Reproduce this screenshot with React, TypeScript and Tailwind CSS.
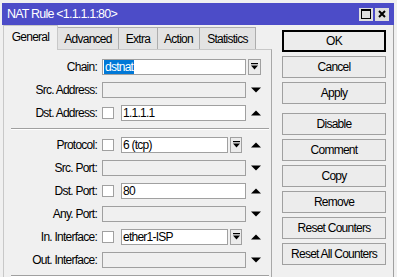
import React from "react";

const font = "font-['Liberation_Sans',Arial,sans-serif]";

function Tri({ up }: { up?: boolean }) {
  return (
    <svg width="10" height="6" viewBox="0 0 10 6" className="block">
      <path d={up ? "M0 5.5 L5 0.5 L10 5.5 Z" : "M0 0.5 L10 0.5 L5 5.5 Z"} fill="#000" />
    </svg>
  );
}

function DropBtn({ w = "w-[13px]" }: { w?: string }) {
  return (
    <div className={`${w} h-[16px] border border-[#a0a0a0] bg-[#ececec] flex items-center justify-center`}>
      <svg width="7" height="7" viewBox="0 0 7 7" className="block">
        <rect x="0" y="0" width="7" height="1.2" fill="#000" />
        <path d="M0 2.5 L7 2.5 L3.5 6.5 Z" fill="#000" />
      </svg>
    </div>
  );
}

function Check() {
  return <div className="w-[12px] h-[12px] border border-[#a0a0a0] bg-white shrink-0" />;
}

function Input({ w, value, disabled, selected }: { w: string; value?: string; disabled?: boolean; selected?: boolean }) {
  return (
    <div
      className={`${w} h-[16px] border border-[#a0a0a0] ${disabled ? "bg-[#f0f0f0]" : "bg-white"} pl-[1px] flex items-center leading-[14px] overflow-hidden whitespace-nowrap text-black`}
    >
      {selected ? <span className="bg-[#0078d7] text-white px-[1px]">{value}</span> : value}
    </div>
  );
}

function Row({ label, children }: { label: string; children: React.ReactNode }) {
  return (
    <div className="flex items-center h-[23px]">
      <div className="w-[93px] text-right whitespace-nowrap text-black">{label}</div>
      <div className="ml-[5px] flex items-center">{children}</div>
    </div>
  );
}

function Sep() {
  return <div className="ml-[7px] mr-[2px] mt-[4px] mb-[3px] border-t border-[#a0a0a0] border-b border-b-white" />;
}

const tabs = [
  { name: "General", w: "w-[55px]" },
  { name: "Advanced", w: "w-[62px]" },
  { name: "Extra", w: "w-[40px]" },
  { name: "Action", w: "w-[43px]" },
  { name: "Statistics", w: "w-[57px]" },
];

const buttons = ["Cancel", "Apply"];
const buttons2 = ["Disable", "Comment", "Copy", "Remove", "Reset Counters", "Reset All Counters"];

function Btn({ label, def }: { label: string; def?: boolean }) {
  return (
    <div
      className={`h-[22px] flex items-center justify-center ${def ? "border-2 border-black" : "border border-[#a0a0a0]"} bg-[#ececec] text-black whitespace-nowrap`}
    >
      {label}
    </div>
  );
}

export default function App() {
  return (
    <div className={`${font} text-[12px] tracking-[-0.75px] w-[397px] h-[277px] bg-[#f0f0f0] overflow-hidden pt-[3px] pl-[2px]`}>
      <div className="w-[392px] h-[22px] bg-[#4c4cc8] flex items-center pl-[5px] pr-[5px]">
        <div className="text-white text-[12.5px] tracking-[-0.8px] whitespace-nowrap">NAT Rule &lt;1.1.1.1:80&gt;</div>
        <div className="ml-auto flex items-center gap-[2px]">
          <div className="w-[14px] h-[13px] bg-[#dedede] flex items-center justify-center">
            <div className="w-[10px] h-[10px] border-[1.5px] border-t-2 border-black" />
          </div>
          <div className="w-[14px] h-[13px] bg-[#dedede] flex items-center justify-center">
            <svg width="8" height="8" viewBox="0 0 8 8" className="block">
              <path d="M1 1 L7 7 M7 1 L1 7" stroke="#000" strokeWidth="2" />
            </svg>
          </div>
        </div>
      </div>

      <div className="w-[392px] h-[252px] flex border-r border-[#a0a0a0]">
        <div className="w-[270px] flex flex-col">
          <div className="h-[25px] flex items-end pl-[1px]">
            {tabs.map((t, i) =>
              i === 0 ? (
                <div
                  key={t.name}
                  className={`${t.w} h-[25px] -mb-px relative z-10 border border-b-0 border-[#c8c8c8] bg-[#f0f0f0] flex items-center justify-center pb-[2px]`}
                >
                  {t.name}
                </div>
              ) : (
                <div
                  key={t.name}
                  className={`${t.w} h-[22px] -ml-px border border-b-0 border-[#adadad] bg-[#e3e3e3] flex items-center justify-center`}
                >
                  {t.name}
                </div>
              )
            )}
          </div>
          <div className="ml-[1px] flex-1 border-t border-l border-r border-[#c8c8c8] border-r-[#a8a8a8] pt-[5px]">
            <Row label="Chain:">
              <Input w="w-[144px]" value="dstnat" selected />
              <div className="ml-[2px]">
                <DropBtn />
              </div>
            </Row>
            <Row label="Src. Address:">
              <Input w="w-[144px]" disabled />
              <div className="ml-[5px]">
                <Tri />
              </div>
            </Row>
            <Row label="Dst. Address:">
              <Check />
              <div className="ml-[7px]">
                <Input w="w-[125px]" value="1.1.1.1" />
              </div>
              <div className="ml-[5px]">
                <Tri up />
              </div>
            </Row>
            <Sep />
            <Row label="Protocol:">
              <Check />
              <div className="ml-[7px]">
                <Input w="w-[107px]" value="6 (tcp)" />
              </div>
              <div className="ml-[2px]">
                <DropBtn w="w-[12px]" />
              </div>
              <div className="ml-[9px]">
                <Tri up />
              </div>
            </Row>
            <Row label="Src. Port:">
              <Input w="w-[144px]" disabled />
              <div className="ml-[5px]">
                <Tri />
              </div>
            </Row>
            <Row label="Dst. Port:">
              <Check />
              <div className="ml-[7px]">
                <Input w="w-[125px]" value="80" />
              </div>
              <div className="ml-[5px]">
                <Tri up />
              </div>
            </Row>
            <Row label="Any. Port:">
              <Input w="w-[144px]" disabled />
              <div className="ml-[5px]">
                <Tri />
              </div>
            </Row>
            <Row label="In. Interface:">
              <Check />
              <div className="ml-[7px]">
                <Input w="w-[107px]" value="ether1-ISP" />
              </div>
              <div className="ml-[2px]">
                <DropBtn w="w-[12px]" />
              </div>
              <div className="ml-[9px]">
                <Tri up />
              </div>
            </Row>
            <Row label="Out. Interface:">
              <Input w="w-[144px]" disabled />
              <div className="ml-[5px]">
                <Tri />
              </div>
            </Row>
            <Sep />
          </div>
        </div>

        <div className="ml-[10px] w-[104px] pt-[5px] flex flex-col gap-[4px]">
          <Btn label="OK" def />
          {buttons.map((b) => (
            <Btn key={b} label={b} />
          ))}
          <div className="mt-[5px] flex flex-col gap-[4px]">
            {buttons2.map((b) => (
              <Btn key={b} label={b} />
            ))}
          </div>
        </div>
      </div>
    </div>
  );
}
